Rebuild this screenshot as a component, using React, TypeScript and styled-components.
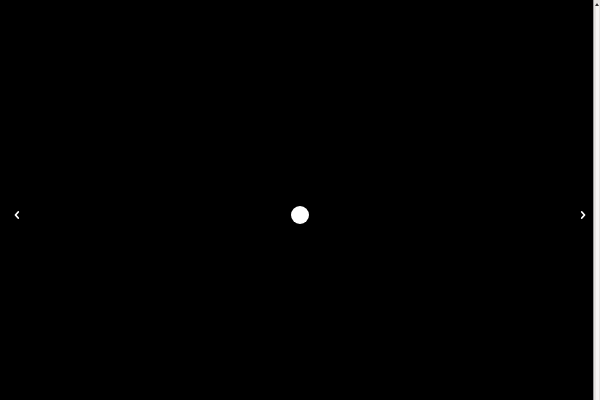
import React from "react";
import styled, { createGlobalStyle } from "styled-components";

const Global = createGlobalStyle`
  html, body { margin: 0; padding: 0; background: #000; }
  body { overflow-x: hidden; font-family: "Liberation Sans", Arial, sans-serif; }
`;

const Slider = styled.section`
  width: 100vw;
  height: 430px;
  background: #000;
  display: flex;
  align-items: center;
`;

const Arrow = styled.button`
  width: 34px;
  height: 34px;
  padding: 0;
  border: 0;
  background: transparent;
  display: flex;
  align-items: center;
  justify-content: center;
  cursor: pointer;
  flex: none;
`;

const Stage = styled.div`
  flex: 1;
  display: flex;
  align-items: center;
  justify-content: center;
`;

const Dot = styled.span`
  width: 18px;
  height: 18px;
  border-radius: 50%;
  background: #fff;
  display: block;
`;

const ScrollRail = styled.div`
  position: fixed;
  top: 0;
  right: 0;
  bottom: 0;
  width: 7px;
  background: #e6e4e2;
  border-left: 1px solid #9a9a9a;
  box-sizing: border-box;
  display: flex;
  justify-content: center;
  padding-top: 3px;
`;

const ScrollThumb = styled.div`
  width: 3px;
  height: 100%;
  background: #f6f5f4;
  display: flex;
  justify-content: center;
`;

const ScrollArrow = styled.span`
  width: 0;
  height: 0;
  border-left: 2px solid transparent;
  border-right: 2px solid transparent;
  border-bottom: 3px solid #333;
`;

const Chevron = ({ dir }: { dir: "left" | "right" }) => (
  <svg width="8" height="10" viewBox="0 0 8 10" aria-hidden>
    <polyline
      points={dir === "left" ? "5.2,2 2.5,5 5.2,8" : "2.8,2 5.5,5 2.8,8"}
      fill="none"
      stroke="#fff"
      strokeWidth="1.8"
      strokeLinecap="round"
      strokeLinejoin="round"
    />
  </svg>
);

export default function App() {
  return (
    <>
      <Global />
      <Slider>
        <Arrow aria-label="Previous">
          <Chevron dir="left" />
        </Arrow>
        <Stage>
          <Dot />
        </Stage>
        <Arrow aria-label="Next">
          <Chevron dir="right" />
        </Arrow>
      </Slider>
      <ScrollRail aria-hidden>
        <ScrollThumb>
          <ScrollArrow />
        </ScrollThumb>
      </ScrollRail>
    </>
  );
}
